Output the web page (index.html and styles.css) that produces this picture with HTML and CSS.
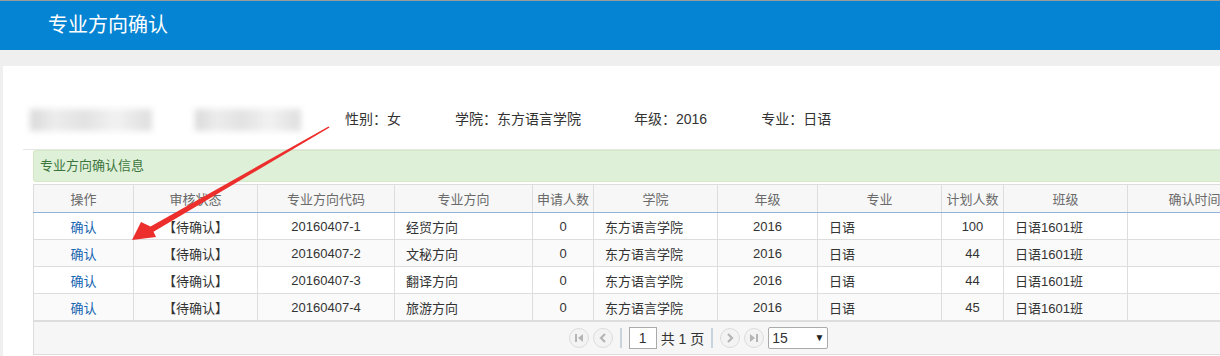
FILE: index.html
```html
<!DOCTYPE html>
<html>
<head>
  <meta charset="utf-8">
  <title>专业方向确认</title>
  <link rel="stylesheet" href="styles.css">
</head>
<body>
  <div class="topbar">专业方向确认</div>

  <div class="panel">
    <div class="info">
      <span class="blur blur-name"></span>
      <span class="blur blur-id"></span>
      <span class="field">性别：女</span>
      <span class="field">学院：东方语言学院</span>
      <span class="field">年级：2016</span>
      <span class="field">专业：日语</span>
    </div>

    <div class="section">
      <div class="section-title">专业方向确认信息</div>

      <div class="grid">
        <table>
          <colgroup>
            <col style="width:100px"><col style="width:124px"><col style="width:137px"><col style="width:138px">
            <col style="width:61px"><col style="width:124px"><col style="width:100px"><col style="width:124px">
            <col style="width:62px"><col style="width:124px"><col style="width:134px"><col>
          </colgroup>
          <thead>
            <tr>
              <th>操作</th><th>审核状态</th><th>专业方向代码</th><th>专业方向</th><th>申请人数</th><th>学院</th>
              <th>年级</th><th>专业</th><th>计划人数</th><th>班级</th><th>确认时间</th><th></th>
            </tr>
          </thead>
          <tbody>
            <tr>
              <td class="c"><a href="#">确认</a></td><td class="c">【待确认】</td><td class="c">20160407-1</td><td>经贸方向</td>
              <td class="c">0</td><td>东方语言学院</td><td class="c">2016</td><td>日语</td><td class="c">100</td><td>日语1601班</td><td></td><td></td>
            </tr>
            <tr class="alt">
              <td class="c"><a href="#">确认</a></td><td class="c">【待确认】</td><td class="c">20160407-2</td><td>文秘方向</td>
              <td class="c">0</td><td>东方语言学院</td><td class="c">2016</td><td>日语</td><td class="c">44</td><td>日语1601班</td><td></td><td></td>
            </tr>
            <tr>
              <td class="c"><a href="#">确认</a></td><td class="c">【待确认】</td><td class="c">20160407-3</td><td>翻译方向</td>
              <td class="c">0</td><td>东方语言学院</td><td class="c">2016</td><td>日语</td><td class="c">44</td><td>日语1601班</td><td></td><td></td>
            </tr>
            <tr class="alt">
              <td class="c"><a href="#">确认</a></td><td class="c">【待确认】</td><td class="c">20160407-4</td><td>旅游方向</td>
              <td class="c">0</td><td>东方语言学院</td><td class="c">2016</td><td>日语</td><td class="c">45</td><td>日语1601班</td><td></td><td></td>
            </tr>
          </tbody>
        </table>

        <div class="pager">
          <span class="pbtn">
            <svg width="10" height="10" viewBox="0 0 10 10"><rect x="1" y="1" width="2" height="8" fill="#b5b5b5"/><path d="M9 1 L4 5 L9 9 Z" fill="#b5b5b5"/></svg>
          </span>
          <span class="pbtn">
            <svg width="10" height="10" viewBox="0 0 10 10"><path d="M7 1 L3 5 L7 9" fill="none" stroke="#b5b5b5" stroke-width="2.2"/></svg>
          </span>
          <span class="psep"></span>
          <input class="pinput" type="text" value="1">
          <span class="ptext">共 1 页</span>
          <span class="psep"></span>
          <span class="pbtn">
            <svg width="10" height="10" viewBox="0 0 10 10"><path d="M3 1 L7 5 L3 9" fill="none" stroke="#b5b5b5" stroke-width="2.2"/></svg>
          </span>
          <span class="pbtn">
            <svg width="10" height="10" viewBox="0 0 10 10"><path d="M1 1 L6 5 L1 9 Z" fill="#b5b5b5"/><rect x="7" y="1" width="2" height="8" fill="#b5b5b5"/></svg>
          </span>
          <span class="psel">15<span class="caret">▼</span></span>
        </div>
      </div>
    </div>
  </div>

  <!-- red annotation arrow drawn over the screenshot -->
  <svg class="arrow" width="1220" height="356" viewBox="0 0 1220 356">
    <polygon points="329.5,127.6 153.5,231.8 156,237 132,240 141,222 150.5,226.6 328.5,126.4" fill="#ec2f2c"/>
  </svg>
</body>
</html>
```

FILE: styles.css
```css
html, body {
  margin: 0;
  overflow: hidden;
}
body {
  width: 1220px;
  height: 356px;
  position: relative;
  background: #efefef;
  font-family: "Liberation Sans", "Noto Sans CJK SC", sans-serif;
  font-size: 13px;
  color: #333;
}

.topbar {
  border-top: 1px solid #9a9a9a;
  height: 49px;
  line-height: 48px;
  background: #0584d3;
  color: #fff;
  font-size: 20px;
  padding-left: 48px;
}

.panel {
  margin: 16px 0 0 3px;
  background: #fff;
  height: 300px;
}

.info {
  height: 63px;
  padding-top: 20px;
  display: flex;
  align-items: center;
  font-size: 14px;
  color: #333;
}
.blur {
  display: inline-block;
  height: 22px;
  filter: blur(3px);
  background: linear-gradient(90deg, #d9d9d9 0%, #ececec 20%, #e2e2e2 45%, #f2f2f2 70%, #dedede 100%);
  margin-top: 4px;
}
.blur-name { width: 122px; margin-left: 27px; }
.blur-id { width: 106px; margin-left: 43px; }
.info .field:nth-child(3) { margin-left: 44px; }
.info .field:nth-child(4) { margin-left: 54px; }
.info .field:nth-child(5) { margin-left: 53px; }
.info .field:nth-child(6) { margin-left: 54px; }

.section {
  margin-left: 20px;
  border-top: 1px solid #e6e6e6;
}
.section-title {
  margin-left: 10px;
  height: 30px;
  line-height: 30px;
  background: #dff0d8;
  border: 1px solid #d6e9c6;
  border-right: none;
  border-radius: 3px 0 0 3px;
  color: #3c763d;
  padding-left: 6px;
}

.grid {
  margin: 2px 0 0 10px;
  width: 1332px;
}
table {
  width: 1332px;
  table-layout: fixed;
  border-collapse: collapse;
}
th, td {
  border: 1px solid #dddddd;
  padding: 0 11px;
  white-space: nowrap;
  overflow: hidden;
  text-align: left;
}
th {
  height: 27px;
  background: #f7f7f7;
  color: #6a6a6a;
  font-weight: normal;
  text-align: center;
  padding: 0;
  border-bottom: 1px solid #8fb3dc;
}
td {
  height: 26px;
  background: #fff;
}
tr.alt td { background: #fafafa; }
td.c { text-align: center; padding: 0; }
tbody tr:last-child td { border-bottom: 2px solid #dddddd; }
a {
  color: #1565b0;
  text-decoration: none;
}

.pager {
  height: 32px;
  background: #f6f6f6;
  border-left: 1px solid #dddddd;
  border-bottom: 1px solid #dddddd;
  display: flex;
  align-items: center;
  justify-content: center;
  gap: 4px;
  padding-right: 2px;
}
.pbtn {
  width: 18px;
  height: 18px;
  border: 1px solid #dcdcdc;
  border-radius: 50%;
  background: #f3f3f3;
  display: flex;
  align-items: center;
  justify-content: center;
}
.psep {
  width: 2px;
  height: 20px;
  background: #c9d3dc;
  margin: 0 3px;
}
.pinput {
  width: 26px;
  height: 20px;
  border: 1px solid #aaaaaa;
  padding: 0;
  text-align: center;
  font-family: "Liberation Sans", sans-serif;
  font-size: 14px;
  color: #333;
  background: #fff;
}
.ptext {
  font-size: 14px;
}
.psel {
  width: 52px;
  height: 20px;
  border: 1px solid #aaaaaa;
  border-radius: 2px;
  background: #fff;
  padding: 0 3px;
  font-size: 14px;
  line-height: 20px;
  display: flex;
  justify-content: space-between;
}
.caret {
  font-size: 10px;
  color: #222;
}

.arrow {
  position: absolute;
  left: 0;
  top: 0;
  pointer-events: none;
}
```
